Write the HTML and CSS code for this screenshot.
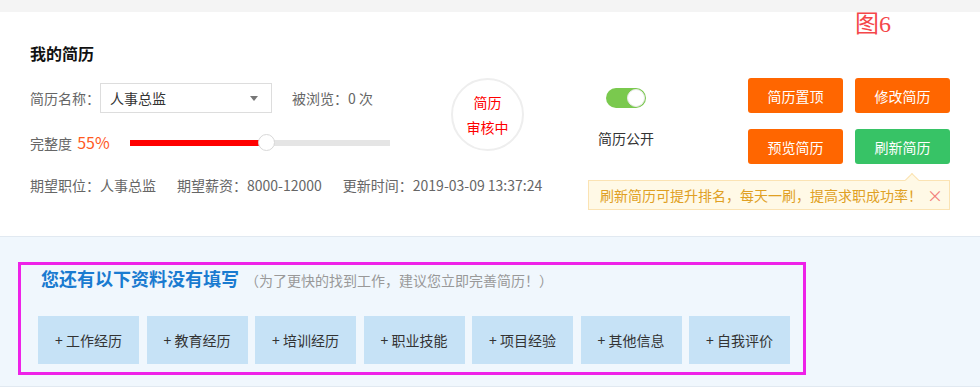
FILE: index.html
```html
<!DOCTYPE html>
<html lang="zh-CN">
<head>
    <meta charset="UTF-8">
    <meta name="viewport" content="width=device-width, initial-scale=1.0">
    <title>我的简历</title>
    <link rel="stylesheet" href="styles.css">
</head>
<body>

    <div class="topbar"></div>

    <div class="resume">
        <span class="fig-label">图6</span>
        <h2 class="resume-title">我的简历</h2>

        <div class="resume-main">
            <div class="info">
                <div class="info-row">
                    <span class="label">简历名称：</span>
                    <div class="select">
                        <span>人事总监</span>
                        <span class="caret"></span>
                    </div>
                    <span class="views">被浏览：0 次</span>
                </div>
                <div class="info-row progress-row">
                    <span class="progress-label">完整度 <em>55%</em></span>
                    <div class="track">
                        <div class="fill" style="width:52.3%"></div>
                        <span class="knob" style="left:52.3%"></span>
                    </div>
                </div>
            </div>

            <div class="status">
                <span>简历</span>
                <span>审核中</span>
            </div>

            <div class="public">
                <span class="switch"><span class="switch-dot"></span></span>
                <span class="public-label">简历公开</span>
            </div>

            <div class="actions">
                <button class="btn">简历置顶</button>
                <button class="btn">修改简历</button>
                <button class="btn">预览简历</button>
                <button class="btn btn-green">刷新简历</button>
                <div class="tip">
                    刷新简历可提升排名，每天一刷，提高求职成功率！
                    <span class="tip-close">×</span>
                </div>
            </div>
        </div>

        <div class="meta">
            <span>期望职位：人事总监</span>
            <span>期望薪资：8000-12000</span>
            <span>更新时间：2019-03-09 13:37:24</span>
        </div>
    </div>

    <div class="missing">
        <div class="missing-box">
            <h3 class="missing-title">您还有以下资料没有填写<small>（为了更快的找到工作，建议您立即完善简历！）</small></h3>
            <div class="missing-list">
                <a class="add-item">+ 工作经历</a>
                <a class="add-item">+ 教育经历</a>
                <a class="add-item">+ 培训经历</a>
                <a class="add-item">+ 职业技能</a>
                <a class="add-item">+ 项目经验</a>
                <a class="add-item">+ 其他信息</a>
                <a class="add-item">+ 自我评价</a>
            </div>
        </div>
    </div>

</body>
</html>
```

FILE: styles.css
```css
body {
    font-family: "Noto Sans CJK SC", "Microsoft YaHei", sans-serif;
    margin: 0;
    padding: 0;
    font-size: 14px;
    color: #666;
    background: #fff;
}

.topbar {
    height: 12px;
    background: #f4f4f4;
}

.resume {
    position: relative;
    padding: 30px 30px 41px;
    border-bottom: 1px solid #e1e9f1;
}

.fig-label {
    position: absolute;
    left: 855px;
    top: 0;
    font-family: "Liberation Serif", "Noto Sans CJK SC", serif;
    font-size: 24px;
    line-height: 24px;
    color: #f4474a;
}

.resume-title {
    margin: 0;
    font-size: 16px;
    line-height: 22px;
    color: #111;
    font-weight: bold;
}

.resume-main {
    display: flex;
    align-items: flex-start;
    margin-top: 14px;
}

.info {
    width: 421px;
    padding-top: 5px;
}

.info-row {
    display: flex;
    align-items: center;
    height: 30px;
    white-space: nowrap;
}

.label {
    width: 70px;
}

.select {
    width: 172px;
    height: 30px;
    box-sizing: border-box;
    border: 1px solid #ddd;
    padding: 0 9px;
    display: flex;
    align-items: center;
    justify-content: space-between;
    color: #333;
}

.caret {
    width: 0;
    height: 0;
    border-left: 4px solid transparent;
    border-right: 4px solid transparent;
    border-top: 5px solid #777;
    margin-right: 4px;
}

.views {
    margin-left: 20px;
}

.progress-row {
    margin-top: 19px;
    height: 20px;
}

.progress-label {
    width: 100px;
}

.progress-label em {
    font-style: normal;
    font-size: 16px;
    color: #ff5a1f;
    margin-left: 2px;
}

.track {
    position: relative;
    width: 260px;
    height: 6px;
    background: #e5e5e5;
    margin-top: 2px;
}

.fill {
    height: 100%;
    background: #f00;
}

.knob {
    position: absolute;
    top: 50%;
    width: 15px;
    height: 15px;
    margin: -9px 0 0 -8px;
    border: 1px solid #d8d8d8;
    border-radius: 50%;
    background: #fff;
}

.status {
    width: 73px;
    height: 73px;
    box-sizing: border-box;
    border: 2px solid #eee;
    border-radius: 50%;
    display: flex;
    flex-direction: column;
    align-items: center;
    justify-content: center;
    color: #f00;
    line-height: 25px;
}

.public {
    display: flex;
    flex-direction: column;
    align-items: center;
    margin-left: 74px;
    padding-top: 10px;
}

.switch {
    position: relative;
    width: 40px;
    height: 20px;
    border-radius: 10px;
    background: #7ac94e;
}

.switch-dot {
    position: absolute;
    right: 1px;
    top: 1px;
    width: 18px;
    height: 18px;
    box-sizing: border-box;
    border-radius: 50%;
    background: #fff;
    border: 1px solid #e8e8e8;
}

.public-label {
    margin-top: 20px;
    color: #333;
    line-height: 20px;
}

.actions {
    position: relative;
    margin-left: auto;
    display: grid;
    grid-template-columns: 95px 95px;
    column-gap: 12px;
    row-gap: 16px;
}

.btn {
    height: 35px;
    border: none;
    border-radius: 3px;
    background: #ff6600;
    color: #fff;
    font-family: inherit;
    font-size: 14px;
    padding: 0;
    cursor: pointer;
}

.btn-green {
    background: #37c366;
}

.tip {
    position: absolute;
    right: 0;
    top: 102px;
    width: 362px;
    height: 30px;
    box-sizing: border-box;
    border: 1px solid #fbe3b3;
    background: #fff9e6;
    color: #e0a023;
    padding-left: 11px;
    line-height: 28px;
    white-space: nowrap;
}

.tip::before {
    content: "";
    position: absolute;
    top: -6px;
    right: 32px;
    width: 9px;
    height: 9px;
    background: #fff9e6;
    border-left: 1px solid #fbe3b3;
    border-top: 1px solid #fbe3b3;
    transform: rotate(45deg);
}

.tip-close {
    position: absolute;
    right: 6px;
    top: 0;
    color: #f2807a;
    font-size: 16px;
}

.meta {
    display: flex;
    gap: 21px;
    margin-top: 11px;
    line-height: 20px;
}

.missing {
    background: #f0f7fd;
    padding: 25px 18px 11px;
    border-bottom: 1px solid #e1e9f1;
}

.missing-box {
    width: 788px;
    height: 113px;
    box-sizing: border-box;
    border: 3px solid #ee22e8;
    padding-left: 17px;
}

.missing-title {
    margin: 1px 0 0 3px;
    font-size: 18px;
    line-height: 24px;
    color: #1a7bd0;
    font-weight: bold;
}

.missing-title small {
    font-size: 14px;
    font-weight: normal;
    color: #999;
    margin-left: 6px;
}

.missing-list {
    display: flex;
    gap: 7.5px;
    margin-top: 24px;
}

.add-item {
    flex: none;
    width: 101px;
    height: 48px;
    display: flex;
    align-items: center;
    justify-content: center;
    background: #c6e2f6;
    color: #333;
}
```
